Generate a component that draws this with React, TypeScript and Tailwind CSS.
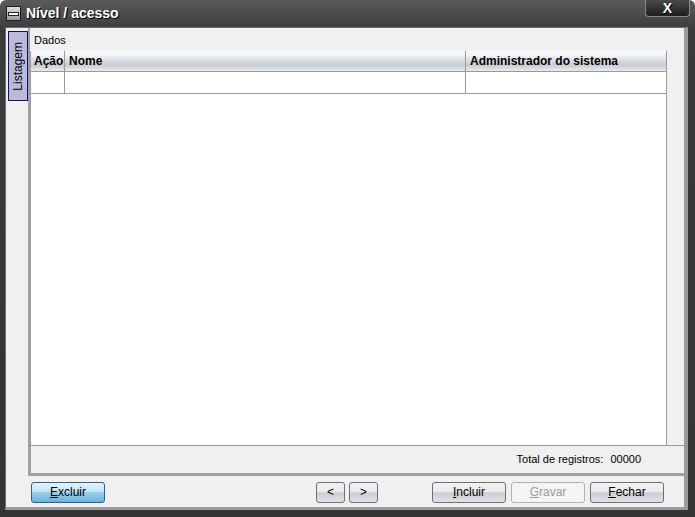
import React from "react";

const font = { fontFamily: '"Liberation Sans", Arial, sans-serif' };

function Botao({
  children,
  largura = "w-[74px]",
  azul,
  desabilitado,
}: {
  children: React.ReactNode;
  largura?: string;
  azul?: boolean;
  desabilitado?: boolean;
}) {
  const base = `${largura} h-[21px] rounded-[3px] border text-[12px] flex items-center justify-center`;
  if (azul)
    return (
      <button className={`${base} border-[#2c628b] bg-[linear-gradient(#e3f4fc,#c4e5f6_45%,#98d1ef_50%,#68b3db)] text-black`}>
        {children}
      </button>
    );
  if (desabilitado)
    return (
      <button className={`${base} border-[#adb2b5] bg-[#f4f4f4] text-[#9c9c9c]`}>{children}</button>
    );
  return (
    <button className={`${base} border-[#707070] bg-[linear-gradient(#f2f2f2,#ebebeb_45%,#c9d0d6_52%,#dde2e6)] text-black`}>
      {children}
    </button>
  );
}

export default function App() {
  return (
    <div
      style={font}
      className="w-[695px] h-[517px] flex flex-col bg-[linear-gradient(#5a5a5a,#3a3a3a_6%,#333_100%)] rounded-t-[6px] overflow-hidden"
    >
      {/* barra de título */}
      <div className="h-[27px] flex items-start pl-[6px] pr-[5px]">
        <div className="mt-[6px] w-[15px] h-[15px] border border-[#1e1e1e] bg-[linear-gradient(#e0e0e0,#9a9a9a)] flex items-center justify-center">
          <div className="w-[11px] h-[4px] bg-white border border-[#222]" />
        </div>
        <span className="ml-[5px] mt-[5px] text-[14px] font-bold text-white leading-[17px] [text-shadow:1px_1px_0_#000]">
          Nível / acesso
        </span>
        <div className="ml-auto w-[45px] h-[17px] rounded-b-[4px] border border-t-0 border-[#8a8a8a] bg-[linear-gradient(#4a4a4a,#1e1e1e)] flex items-center justify-center">
          <span className="text-white font-bold text-[14px] leading-none [text-shadow:1px_1px_0_#000]">X</span>
        </div>
      </div>

      {/* área cliente */}
      <div className="ml-[5px] mr-[7px] mb-[7px] flex-1 flex flex-col bg-[#f0f0f0] border-l border-t border-[#6a6a6a] border-r-[4px] border-r-[#9a9a9a] border-b-[3px] border-b-[#9a9a9a]">
        <div className="flex-1 flex">
          {/* abas verticais */}
          <div className="w-[22px] pt-[3px] pl-[2px]">
            <div className="w-[20px] h-[70px] bg-[#b9bcd9] border border-[#10107a] flex items-center justify-center">
              <span className="[writing-mode:vertical-rl] rotate-180 text-[12px] text-black">Listagem</span>
            </div>
          </div>
          {/* página */}
          <div className="flex-1 flex flex-col border-l-2 border-[#a0a0a0]">
            <div className="h-[23px] pl-[4px] pt-[4px] text-[11px] text-black">Dados</div>
            <div className="flex-1 flex flex-col border-l border-[#a0a0a0]">
              <div className="flex-1 flex">
                <div className="flex-1 bg-white flex flex-col">
                  <div className="h-[21px] flex border-b border-[#9a9a9a] bg-[linear-gradient(#fbfcfc,#e6e9ec_35%,#c4ccd3_70%,#e9ecef)] text-[12px] font-bold text-black">
                    <div className="w-[34px] pl-[3px] flex items-center border-r border-[#9a9a9a]">Ação</div>
                    <div className="w-[401px] pl-[4px] flex items-center border-r border-[#9a9a9a]">Nome</div>
                    <div className="flex-1 pl-[4px] flex items-center">Administrador do sistema</div>
                  </div>
                  <div className="h-[22px] flex border-b border-[#9a9a9a]">
                    <div className="w-[34px] border-r border-[#9a9a9a]" />
                    <div className="w-[401px] border-r border-[#9a9a9a]" />
                    <div className="flex-1" />
                  </div>
                </div>
                <div className="w-[18px] bg-[#f0f0f0] border-l border-[#9a9a9a]" />
              </div>
              <div className="h-[28px] border-t border-[#9a9a9a] flex items-center justify-end pr-[43px] text-[11px] text-black">
                <span>Total de registros:</span>
                <span className="ml-[7px]">00000</span>
              </div>
            </div>
          </div>
        </div>
        <div className="h-[3px] ml-[22px] bg-[#a0a0a0]" />
        {/* botões */}
        <div className="h-[31px] flex items-center pt-[1px] pl-[25px]">
          <Botao azul>
            <span><u>E</u>xcluir</span>
          </Botao>
          <div className="ml-[211px] flex gap-[4px]">
            <Botao largura="w-[29px]">&lt;</Botao>
            <Botao largura="w-[29px]">&gt;</Botao>
          </div>
          <div className="ml-[54px] flex gap-[5px]">
            <Botao>
              <span><u>I</u>ncluir</span>
            </Botao>
            <Botao desabilitado>
              <span><u>G</u>ravar</span>
            </Botao>
            <Botao>
              <span><u>F</u>echar</span>
            </Botao>
          </div>
        </div>
      </div>
    </div>
  );
}
